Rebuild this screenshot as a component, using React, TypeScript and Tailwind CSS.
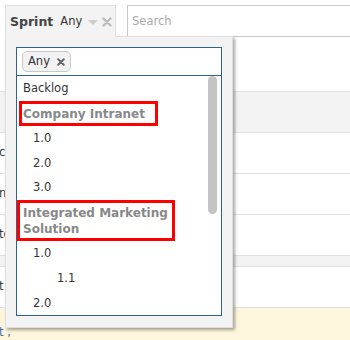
import { useState } from "react";

const XIcon = ({ className }: { className?: string }) => (
  <svg viewBox="0 0 10 10" className={className}>
    <path d="M1.5 1.5 L8.5 8.5 M8.5 1.5 L1.5 8.5" stroke="currentColor" strokeWidth="2.4" strokeLinecap="round" fill="none" />
  </svg>
);

const rows = ["co", "n", "to", "t"];

export default function App() {
  const [query, setQuery] = useState("");

  return (
    <div className="relative w-[350px] h-[340px] overflow-hidden bg-white font-['DejaVu_Sans',Verdana,sans-serif] text-[#333]">
      {/* filter bar */}
      <div className="flex pt-[5px] h-[37px]">
        <div className="relative z-20 ml-[5px] w-[111px] h-[32px] bg-[#f3f3f3] border border-b-0 border-[#dedede] flex items-center pl-[4px] pt-[1px]">
          <span className="text-[12.5px] font-bold text-[#444]">Sprint</span>
          <span className="ml-[7px] text-[11.5px]">Any</span>
          <svg viewBox="0 0 10 5" className="ml-[6px] w-[10px] h-[5px] text-[#ccc]">
            <polygon points="0,0 10,0 5,5" fill="currentColor" />
          </svg>
          <XIcon className="ml-[4px] w-[10px] h-[10px] text-[#bbb]" />
        </div>
        <div className="ml-[11px] flex-1 -mr-[10px] h-[32px] border border-[#c8c8c8] flex items-center pl-[4px] pt-[2px]">
          <input
            value={query}
            onChange={(e) => setQuery(e.target.value)}
            placeholder="Search"
            className="w-full outline-none text-[11.5px] placeholder-[#aaa] bg-transparent"
          />
        </div>
      </div>

      {/* table behind */}
      <div className="h-[54px]" />
      <div className="h-[41px] bg-[#f3f3f3] border-t border-[#e0e0e0]" />
      {rows.slice(0, 3).map((r) => (
        <div key={r} className="h-[41px] border-t border-[#e0e0e0] flex items-center text-[11.5px] -ml-[1px]">
          {r}
        </div>
      ))}
      <div className="h-[11px] bg-[#f3f3f3] border-t border-[#e0e0e0]" />
      <div className="h-[41px] border-t border-[#e0e0e0] flex items-center text-[11.5px] -ml-[1px]">
        {rows[3]}
      </div>
      <div className="h-[40px] bg-[#fdf5dc] border-t border-[#e0e0e0] pt-[16px] text-[11.5px] text-[#3b6ea5] -ml-[1px]">
        t ,
      </div>

      {/* dropdown panel */}
      <div className="absolute z-10 left-[5px] top-[36px] w-[228px] h-[292px] bg-[#f3f3f3] border border-[#dedede] shadow-[2px_2px_3px_rgba(0,0,0,0.35)] p-[10px]">
        <div className="h-[269px] border border-[#2d6496] bg-white flex flex-col">
          <div className="h-[28px] border-b border-[#2d6496] pl-[5px] pt-[3px]">
            <div className="w-[49px] h-[21px] rounded-[5px] border border-[#c8c8c8] bg-[#f2f2f2] flex items-center pl-[5px] text-[11.5px]">
              Any
              <XIcon className="ml-[7px] w-[8px] h-[8px] text-[#666]" />
            </div>
          </div>
          <div className="relative flex-1 overflow-hidden text-[11.5px]">
            <div className="h-[25px] flex items-center pl-[6px]">Backlog</div>
            <div className="h-[25px] flex items-center">
              <div className="ml-[2px] w-[139px] h-[25px] border-[3px] border-[#f00] flex items-center pl-[1px] text-[12px] font-bold text-[#888]">
                Company Intranet
              </div>
            </div>
            <div className="h-[25px] flex items-center pl-[16px]">1.0</div>
            <div className="h-[25px] flex items-center pl-[16px]">2.0</div>
            <div className="h-[24px] flex items-center pl-[16px]">3.0</div>
            <div className="w-[158px] h-[41px] border-[3px] border-[#f00] flex items-center pl-[3px] text-[12px] leading-[16px] font-bold text-[#888]">
              Integrated Marketing Solution
            </div>
            <div className="h-[25px] flex items-center pl-[16px]">1.0</div>
            <div className="h-[25px] flex items-center pl-[40px]">1.1</div>
            <div className="h-[25px] flex items-center pl-[16px]">2.0</div>
            <div className="absolute left-[191px] top-0 w-[9px] h-[138px] rounded-full bg-[#c4c4c4]" />
          </div>
        </div>
      </div>
    </div>
  );
}
